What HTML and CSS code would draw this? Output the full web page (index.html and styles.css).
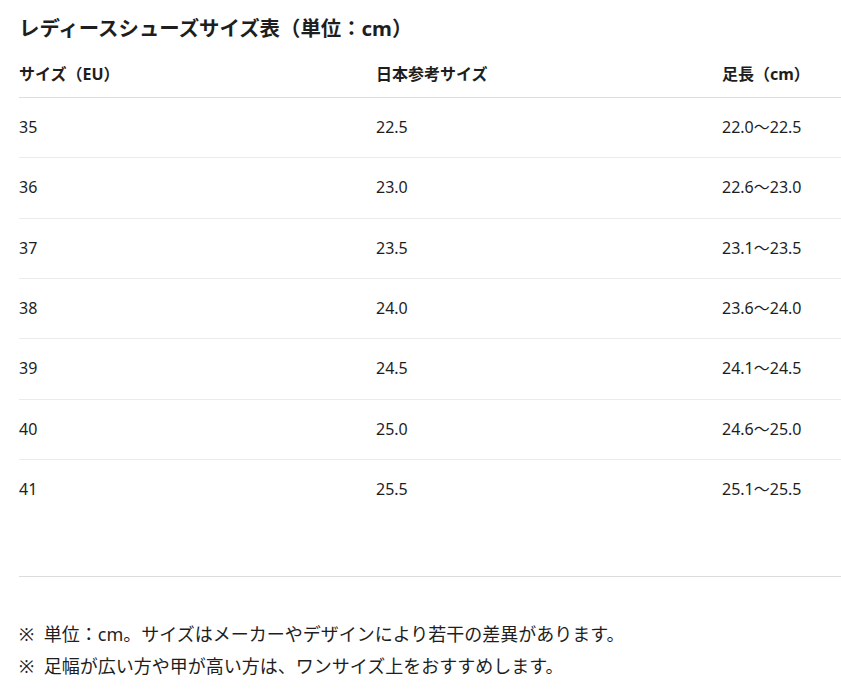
FILE: index.html
```html
<!DOCTYPE html>
<html lang="ja">
<head>
<meta charset="utf-8">
<title>レディースシューズサイズ表</title>
<link rel="stylesheet" href="styles.css">
</head>
<body>
<main class="page">
  <h1 class="title">レディースシューズサイズ表（単位：cm）</h1>
  <table class="size-table">
    <colgroup>
      <col class="c1">
      <col class="c2">
      <col class="c3">
    </colgroup>
    <thead>
      <tr><th>サイズ（EU）</th><th>日本参考サイズ</th><th>足長（cm）</th></tr>
    </thead>
    <tbody>
      <tr><td>35</td><td>22.5</td><td>22.0～22.5</td></tr>
      <tr><td>36</td><td>23.0</td><td>22.6～23.0</td></tr>
      <tr><td>37</td><td>23.5</td><td>23.1～23.5</td></tr>
      <tr><td>38</td><td>24.0</td><td>23.6～24.0</td></tr>
      <tr><td>39</td><td>24.5</td><td>24.1～24.5</td></tr>
      <tr><td>40</td><td>25.0</td><td>24.6～25.0</td></tr>
      <tr><td>41</td><td>25.5</td><td>25.1～25.5</td></tr>
    </tbody>
  </table>
  <hr class="divider">
  <div class="notes">
    <p><span class="mark">※</span> 単位：cm。サイズはメーカーやデザインにより若干の差異があります。</p>
    <p><span class="mark">※</span> 足幅が広い方や甲が高い方は、ワンサイズ上をおすすめします。</p>
  </div>
</main>
</body>
</html>
```
FILE: styles.css
```css
html, body {
  margin: 0;
  padding: 0;
  background: #ffffff;
}
body {
  font-family: "Noto Sans", "Noto Sans CJK JP", sans-serif;
  color: #1e1e1e;
}
.page {
  padding: 14px 0 0 19px;
}
.title {
  margin: 0 0 10px 0;
  font-size: 20.4px;
  line-height: 28px;
  font-weight: 700;
}
.size-table {
  width: 100%;
  border-collapse: collapse;
  table-layout: fixed;
}
.c1 { width: 357px; }
.c2 { width: 346px; }
.size-table th {
  text-align: left;
  font-size: 16px;
  line-height: 21px;
  font-weight: 700;
  padding: 12px 0;
  border-bottom: 1px solid #dedede;
}
.size-table td {
  font-size: 16px;
  line-height: 21.33px;
  padding: 19px 0 19px 0;
  border-bottom: 1px solid #ebebeb;
}
.size-table tbody tr:last-child td {
  border-bottom: none;
}
.divider {
  margin: 57px 0 0 0;
  border: 0;
  border-top: 1px solid #dcdcdc;
  height: 0;
}
.notes {
  padding-top: 41px;
}
.notes p {
  margin: 0;
  font-size: 18px;
  line-height: 32px;
}
.mark {
  margin-right: 5px;
}
```
